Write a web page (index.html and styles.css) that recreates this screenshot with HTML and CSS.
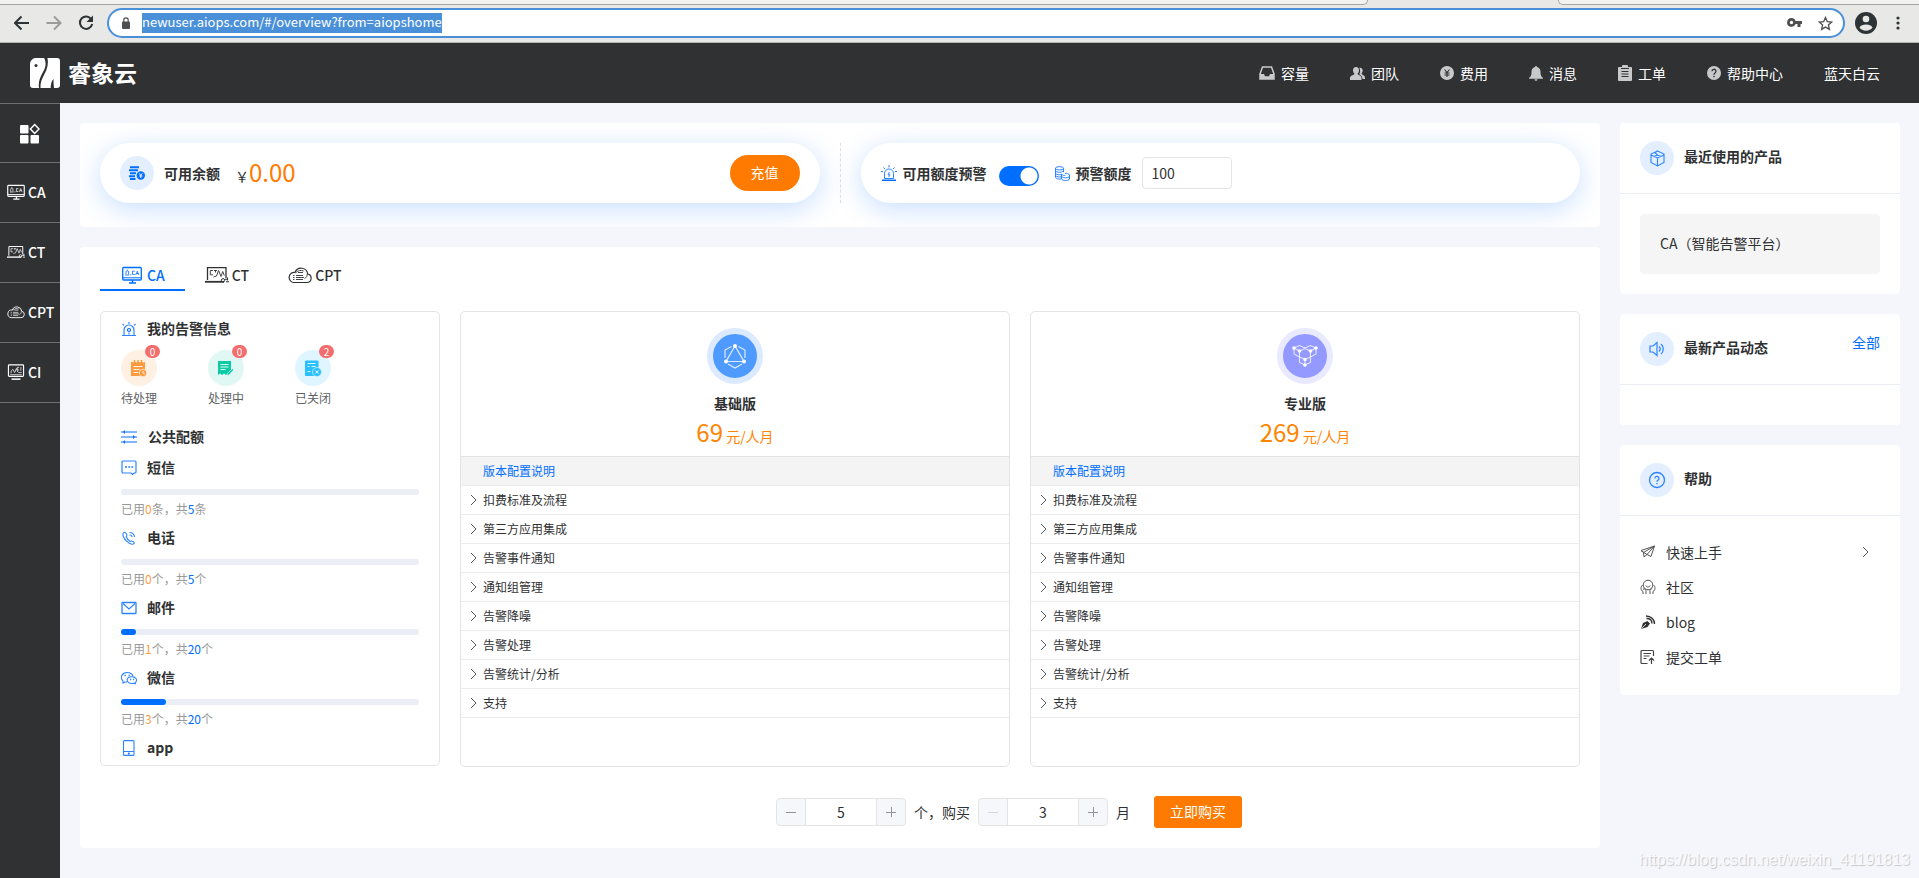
FILE: index.html
```html
<!DOCTYPE html>
<html lang="zh-CN">
<head>
<meta charset="utf-8">
<title>睿象云</title>
<link rel="stylesheet" href="styles.css">
</head>
<body>
<svg class="sprite" aria-hidden="true">
  <symbol id="i-ca" viewBox="0 0 20 18"><rect x=".7" y="1.500" width="18.600" height="12.500" rx="1" fill="none" stroke="currentColor" stroke-width="1.300"/><path d="M1 11.800h18" stroke="currentColor" stroke-width="1"/><path d="M7 17h7M10.500 14v2.500" stroke="currentColor" stroke-width="1.500"/><path d="M3.200 9h4M4 8.500V6a1.300 1.300 0 0 1 2.600 0v2.500M5.300 3.600v.8M8.200 8.800h1.200M12.800 5.200h-2.300v3.300h2.300M13.800 8.800l1.500-3.600 1.500 3.600M14.400 7.500h1.800" fill="none" stroke="currentColor" stroke-width=".8"/></symbol>
  <symbol id="i-ct" viewBox="0 0 24 18"><path d="M2.500 14V1.700h18.500V12" fill="none" stroke="currentColor" stroke-width="1.300"/><path d="M0 15.800h19" stroke="currentColor" stroke-width="1.800"/><path d="M8 4.500H5.300v4.300H8M9 4.500h3M10.500 4.500v2M8.500 11l3-1 2-5.500 2.500 6 1.700-5 1.600 4" fill="none" stroke="currentColor" stroke-width=".9"/><circle cx="18" cy="14.300" r="1.700" fill="none" stroke="currentColor"/><path d="M20 13.300h3M21 15.800h3M22.500 11.500v3" stroke="currentColor" stroke-width="1.100"/></symbol>
  <symbol id="i-cpt" viewBox="0 0 24 18"><path d="M5.500 16.500h13.200a4.300 4.300 0 0 0 1-8.500A6.600 6.600 0 0 0 7 6.400 5 5 0 0 0 5.500 16.500z" fill="none" stroke="currentColor" stroke-width="1.200"/><path d="M8 9.500h7M8 11.500h8M8 13.500h7M5 9.500h1.500M5 11.500h1.500M5 13.500h1.500M7.500 7C9.500 4.500 13 3.800 15.600 5M10 6.500h5M16.500 12.500c2-1 2.800-2.500 2.600-4.300" fill="none" stroke="currentColor" stroke-width=".9"/></symbol>
  <symbol id="i-ci" viewBox="0 0 20 18"><rect x="1.500" y="1" width="17" height="13" rx="1" fill="none" stroke="currentColor" stroke-width="1.300"/><path d="M5 17h10" stroke="currentColor" stroke-width="1.700"/><path d="M3.500 12h13M4.500 10.500V8l2-2 2 3.500 2-4.500 1.500 4M13.500 3.800h-2v3h2M15.500 3.500v4M12.500 9.500h4" fill="none" stroke="currentColor" stroke-width=".8"/></symbol>
  <symbol id="i-chev" viewBox="0 0 8 12"><path d="M1 1l5 5-5 5" fill="none" stroke="#55575c" stroke-width="1"/></symbol>
</svg>

<div class="chrome">
  <div class="tabstrip"><span class="tab-edge left-edge"></span><span class="tab-edge right-edge"></span></div>
  <div class="toolbar">
    <button class="tool" aria-label="后退"><svg width="16" height="16" viewBox="0 0 16 16"><path d="M15 8H1.500M7.500 1.500L1 8l6.500 6.500" fill="none" stroke="#2e3436" stroke-width="2"/></svg></button>
    <button class="tool" aria-label="前进"><svg width="16" height="16" viewBox="0 0 16 16"><path d="M.5 8H14M8 1.500L14.500 8 8 14.500" fill="none" stroke="#9a9c99" stroke-width="2"/></svg></button>
    <button class="tool" aria-label="刷新"><svg width="16" height="16" viewBox="0 0 16 16"><path d="M13.300 4.200A6.200 6.200 0 1 0 14.200 9" fill="none" stroke="#2e3436" stroke-width="2"/><path d="M15 .5v6.500H8.500z" fill="#2e3436"/></svg></button>
    <div class="omnibox">
      <svg width="8" height="12" viewBox="0 0 8 12"><rect y="4.500" width="8" height="7.500" rx="1" fill="#4d4f50"/><path d="M1.800 5V3a2.200 2.200 0 0 1 4.400 0v2" fill="none" stroke="#4d4f50" stroke-width="1.200"/></svg>
      <input class="url" type="text" aria-label="地址" value="newuser.aiops.com/#/overview?from=aiopshome">
      <svg class="push" width="15" height="10" viewBox="0 0 15 10"><path fill-rule="evenodd" d="M4.500 0a4.300 4.300 0 0 1 4.100 3H15v3h-1.500v3h-3V6H8.600A4.400 4.400 0 1 1 4.500 0zm0 2.800a1.700 1.700 0 1 0 0 3.400 1.700 1.700 0 0 0 0-3.400z" fill="#4d4f50"/></svg>
      <svg width="15" height="15" viewBox="0 0 15 15"><path d="M7.500 1.500l1.800 4.100 4.400.4-3.300 3 1 4.400-3.900-2.300-3.900 2.300 1-4.400-3.300-3 4.400-.4z" fill="none" stroke="#4d4f50" stroke-width="1.300"/></svg>
    </div>
    <button class="tool" aria-label="用户"><svg width="22" height="22" viewBox="0 0 22 22"><circle cx="11" cy="11" r="11" fill="#2e3436"/><circle cx="11" cy="7" r="3.300" fill="#e8e8e6"/><path d="M4.500 15.500c1.500-4 11.500-4 13 0-2.500 4.200-10.500 4.200-13 0z" fill="#e8e8e6"/></svg></button>
    <button class="tool" aria-label="菜单"><svg width="4" height="14" viewBox="0 0 4 14"><g fill="#2e3436"><circle cx="2" cy="2" r="1.600"/><circle cx="2" cy="7" r="1.600"/><circle cx="2" cy="12" r="1.600"/></g></svg></button>
  </div>
</div>

<header class="header">
  <a class="logo" href="#">
    <svg width="30" height="30" viewBox="0 0 30 30"><path d="M5.500 0H14c2.500 4 2 9-1 14C10 19.500 8 24 9 30H3a3 3 0 0 1-3-3V6a6 6 0 0 1 5.500-6z" fill="#fff"/><circle cx="6" cy="7.500" r="1.500" fill="#303133"/><path d="M17.500 0H27a3 3 0 0 1 3 3v24a3 3 0 0 1-3 3h-3c-.5-3-.5-6-.5-9-2 2-2.800 5-2.800 9H10.500c-.5-5 1.500-9.500 4-14 3-5.500 4-10.500 3-16z" fill="#fff"/></svg>
    <span>睿象云</span>
  </a>
  <nav class="topnav">
    <a href="#"><svg width="16" height="14" viewBox="0 0 16 14"><path d="M3.500 1h9L15 8v5H1V8z" fill="none" stroke="#c8c9cb" stroke-width="1.500"/><path d="M1 8h4l1 2.200h4L11 8h4v5H1z" fill="#c8c9cb"/></svg>容量</a>
    <a href="#"><svg width="15" height="13" viewBox="0 0 15 13"><g fill="#c8c9cb"><path d="M6 0c2 0 3 1.400 3 3.200 0 1.500-.6 2.700-1.500 3.500.5 1.500 4 1.500 4 4.300V13H0v-2c0-2.800 4-2.800 4.500-4.300C3.600 5.900 3 4.700 3 3.200 3 1.400 4 0 6 0z"/><path d="M10 .7c1.700 0 2.700 1.200 2.700 2.800 0 1.300-.5 2.200-1.200 2.900.4 1.500 3.500 1.600 3.500 4.100V12h-2.500c0-3-2-3.800-3.200-4.800C10.300 5.500 10.500 3 9.300 .8z"/></g></svg>团队</a>
    <a href="#"><svg width="14" height="14" viewBox="0 0 14 14"><circle cx="7" cy="7" r="7" fill="#c8c9cb"/><path d="M4.500 3.500L7 6.500l2.500-3M7 6.500V11M4.500 7h5M4.500 9h5" fill="none" stroke="#303133" stroke-width="1.100"/></svg>费用</a>
    <a href="#"><svg width="14" height="15" viewBox="0 0 14 15"><path d="M7 0c.7 0 1 .5 1 1 2.500.5 3.500 2.500 3.500 5 0 3 .5 4.500 2.500 6v.7H0V12c2-1.500 2.500-3 2.500-6 0-2.500 1-4.500 3.500-5 0-.5.300-1 1-1zM5.500 13.300h3a1.500 1.500 0 0 1-3 0z" fill="#c8c9cb"/></svg>消息</a>
    <a href="#"><svg width="14" height="16" viewBox="0 0 14 16"><path d="M1 2h3V1a1 1 0 0 1 1-1h4a1 1 0 0 1 1 1v1h3a1 1 0 0 1 1 1v12a1 1 0 0 1-1 1H1a1 1 0 0 1-1-1V3a1 1 0 0 1 1-1z" fill="#c8c9cb"/><path d="M3 3.500h8M3.500 6.500h7M3.500 9h7M3.500 11.500h7" stroke="#303133" stroke-width="1"/></svg>工单</a>
    <a href="#"><svg width="14" height="14" viewBox="0 0 14 14"><circle cx="7" cy="7" r="7" fill="#c8c9cb"/><path d="M5 5.300a2 2 0 1 1 3 1.700c-.8.500-1 .8-1 1.700M7 9.800v1.400" fill="none" stroke="#303133" stroke-width="1.300"/></svg>帮助中心</a>
    <a href="#">蓝天白云</a>
  </nav>
</header>

<div class="body">
  <nav class="sidebar">
    <a class="home" href="#" aria-label="总览"><svg width="20" height="21" viewBox="0 0 20 21"><g fill="#fff"><rect y="2" width="8.500" height="8.500" rx="1"/><rect y="12" width="8.500" height="8.500" rx="1"/><rect x="10.500" y="12" width="8.500" height="8.500" rx="1"/></g><path d="M14.700 1.500l4.300 4.500-4.300 4.500L10.400 6z" fill="none" stroke="#fff" stroke-width="1.500"/></svg></a>
    <a href="#"><svg width="18" height="16"><use href="#i-ca"/></svg>CA</a>
    <a href="#"><svg width="18" height="14"><use href="#i-ct"/></svg>CT</a>
    <a href="#"><svg width="18" height="14"><use href="#i-cpt"/></svg>CPT</a>
    <a href="#"><svg width="18" height="16"><use href="#i-ci"/></svg>CI</a>
  </nav>

  <main class="main">
    <section class="card balance">
      <div class="pill">
        <span class="round"><svg width="16" height="14" viewBox="0 0 16 14"><path d="M1 1.300h9M0 4.300h9M1 7.300h6M0 10.300h6M1 13h5.500" stroke="#006eff" stroke-width="2"/><circle cx="11.800" cy="9.500" r="4.200" fill="#006eff"/><path d="M10.200 7.200l1.600 2 1.600-2M11.800 9v3M10.200 10h3.200" fill="none" stroke="#fff" stroke-width=".9"/></svg></span>
        <b class="pill-title">可用余额</b>
        <span class="money">￥<em>0.00</em></span>
        <button class="recharge">充值</button>
      </div>
      <div class="split"></div>
      <div class="pill alert-pill">
        <svg width="16" height="16" viewBox="0 0 16 16"><path d="M1 15.300h14" stroke="#006eff" stroke-width="1.400"/><path d="M3.500 13.500V8.500a4.500 4.500 0 0 1 9 0v5zM8 0v2.500M2.500 2.500l1.500 1.500M13.500 2.500L12 4M0 6.500h2M14 6.500h2M8.500 7L7 9.800h2L7.700 12" fill="none" stroke="#2b83ff" stroke-width="1"/></svg>
        <label for="warn-on">可用额度预警</label>
        <input class="switch" id="warn-on" type="checkbox" role="switch" checked>
        <svg width="15" height="15" viewBox="0 0 15 15"><g fill="none" stroke="#2b83ff"><ellipse cx="4.500" cy="2.300" rx="4" ry="1.700"/><path d="M.5 2.300v9c.5 1.500 3 2 5.500 1.700M8.500 2.300v4M.5 4.800c1.500 2 6 2 8 0M.5 7.300c1.500 1.500 4 1.700 5.500 1.300M.5 9.600c1.500 1.300 3.500 1.600 5.500 1.200"/><path d="M6.500 8v5c1 2 7 2 8 0V9M6.500 8c1.500 1.800 3 1.500 4 1.300M6.500 10.500c1.500 1.800 6.500 1.800 8 0M10 7.500c2-.5 4 .3 4.500 1.500"/></g></svg>
        <label for="warn-at">预警额度</label>
        <input class="amount" id="warn-at" type="text" value="100">
      </div>
    </section>

    <section class="card product">
      <div class="tabs" role="tablist">
        <button class="tab active" role="tab" aria-selected="true"><svg width="20" height="18"><use href="#i-ca"/></svg>CA</button>
        <button class="tab" role="tab"><svg width="24" height="18"><use href="#i-ct"/></svg>CT</button>
        <button class="tab" role="tab"><svg width="24" height="18"><use href="#i-cpt"/></svg>CPT</button>
      </div>
      <div class="grid">
        <div class="panel info">
          <h3 class="row-title"><svg width="16" height="16" viewBox="0 0 16 16"><path d="M1 14.500h14M3 14V9a5 5 0 0 1 10 0v5M8 1v2M1.500 3l1.500 1.300M14.500 3L13 4.300M8 11.500v2" fill="none" stroke="#2b83ff" stroke-width="1.200"/><circle cx="8" cy="9" r="1.500" fill="none" stroke="#006eff" stroke-width="1.200"/></svg>我的告警信息</h3>
          <div class="alerts">
            <a class="alert" href="#"><span class="disc todo"><svg width="16" height="17" viewBox="0 0 16 17"><path d="M0 2h14v14H0z" fill="#ff9b3f"/><path d="M2.500 6.500h9M2.500 9.500h6M2.500 12.500h5" stroke="#fff0e4" stroke-width="1.200"/><path d="M3.500 0v3.500M7 0v3.500M10.500 0v3.500" stroke="#ff9b3f" stroke-width="1.500"/><path d="M2 2h1M5 2h1M8.500 2h1M12 2h1" stroke="#fff0e4"/><circle cx="12" cy="13" r="3.700" fill="#ff9b3f" stroke="#fff0e4" stroke-width=".7"/><path d="M12 11v2.300h1.800" fill="none" stroke="#fff0e4"/></svg><i class="badge">0</i></span>待处理</a>
            <a class="alert" href="#"><span class="disc doing"><svg width="16" height="16" viewBox="0 0 16 16"><path d="M0 1h13v9l-5 5-2-1.500L4 15l-2-1.500L0 15z" fill="#0ccba5"/><path d="M2.500 4.500h8M2.500 7h8M2.500 9.500h5" stroke="#e0f8f3" stroke-width="1.200"/><path d="M14.500 8.500l-5 5-.5 2 2-.5 4.500-5z" fill="#0ccba5" stroke="#e0f8f3" stroke-width=".6"/></svg><i class="badge">0</i></span>处理中</a>
            <a class="alert" href="#"><span class="disc done"><svg width="17" height="17" viewBox="0 0 17 17"><rect width="13.500" height="15.500" y=".5" rx="1" fill="#29c0ff"/><path d="M2.500 3.500h8M2.500 6.500h2M6.500 6.500h4M2.500 11.500h3" stroke="#dff5ff" stroke-width="1.200"/><circle cx="12" cy="12" r="4.500" fill="#29c0ff" stroke="#dff5ff" stroke-width=".7"/><path d="M10.300 10.300l3.400 3.400M13.700 10.300l-3.400 3.400" stroke="#dff5ff"/></svg><i class="badge">2</i></span>已关闭</a>
          </div>
          <h3 class="row-title quota"><svg width="16" height="16" viewBox="0 0 16 16"><path d="M0 3h16M0 8h16M0 13h16" stroke="#006eff" stroke-width="1.200"/><path d="M4 1L2 3l2 2zM12 6l2 2-2 2zM4 11l-2 2 2 2z" fill="#006eff"/></svg>公共配额</h3>

          <div class="meter">
            <h4 class="row-title"><svg width="16" height="16" viewBox="0 0 16 16"><path d="M10 13H2a1 1 0 0 1-1-1V2a1 1 0 0 1 1-1h12a1 1 0 0 1 1 1v10a1 1 0 0 1-1 1h-1l-1.500 1.500L10 13" fill="none" stroke="#2b83ff" stroke-width="1.200"/><path d="M4 7h2M7.200 7h2M10.300 7h2" stroke="#2b83ff" stroke-width="1.400"/></svg>短信</h4>
            <div class="bar"><span style="width:0%"></span></div>
            <p>已用<i class="used">0</i>条，共<i class="total">5</i>条</p>
          </div>
          <div class="meter">
            <h4 class="row-title"><svg width="16" height="16" viewBox="0 0 16 16"><path d="M2 3.500C3 1.500 4.500 2 5.500 4s.5 2-.3 2.800C6 9 7.500 10.500 9.300 11.500c1-.8 1.200-1 2.700 0s1.800 1.700.2 2.500C9 15.500 1.200 8.500 2 3.500zM8.500 2.500c3 0 5 2 5 4.500M8.500 5c1.500 0 2.500 1 2.500 2" fill="none" stroke="#2b83ff" stroke-width="1.100"/></svg>电话</h4>
            <div class="bar"><span style="width:0%"></span></div>
            <p>已用<i class="used">0</i>个，共<i class="total">5</i>个</p>
          </div>
          <div class="meter">
            <h4 class="row-title"><svg width="16" height="16" viewBox="0 0 16 16"><rect x="1" y="2.500" width="14" height="11" rx=".5" fill="none" stroke="#2b83ff" stroke-width="1.300"/><path d="M2 3.500l6 5.500 6-5.500" fill="none" stroke="#2b83ff" stroke-width="1.100"/></svg>邮件</h4>
            <div class="bar"><span style="width:5%"></span></div>
            <p>已用<i class="used">1</i>个，共<i class="total">20</i>个</p>
          </div>
          <div class="meter">
            <h4 class="row-title"><svg width="16" height="16" viewBox="0 0 16 16"><path d="M6 12c-1 0-1.500 0-2 0L2 13V10.800C-1.500 7.500 1 2.500 6 2.500c3.500 0 6 2 6 4.200" fill="none" stroke="#2b83ff" stroke-width="1.100"/><path d="M11 6.700c-6.500 0-6.500 6.800 0 6.800.800 0 1.300 0 1.800-.3l1.500.6v-1.300c2.500-2 1-5.800-3.300-5.800z" fill="none" stroke="#2b83ff" stroke-width="1.100"/><path d="M3.500 5.500h1.300M7.500 5.500h1.300M9 9.500h1.200M12 9.500h1.200" stroke="#2b83ff" stroke-width="1.300"/></svg>微信</h4>
            <div class="bar"><span style="width:15%"></span></div>
            <p>已用<i class="used">3</i>个，共<i class="total">20</i>个</p>
          </div>
          <div class="meter">
            <h4 class="row-title"><svg width="16" height="16" viewBox="0 0 16 16"><rect x="2.500" y=".6" width="10.500" height="14.800" rx="1" fill="none" stroke="#2b83ff" stroke-width="1.100"/><path d="M2.500 11.500H13" stroke="#2b83ff"/><circle cx="7.800" cy="13.500" r="1" fill="#006eff"/></svg>app</h4>
          </div>
        </div>

        <article class="panel plan">
          <div class="plan-head">
            <span class="medal basic"><svg width="26" height="26" viewBox="0 0 26 26"><g fill="none" stroke="#dcebff" stroke-width="1.200"><path d="M9.500 3.500L3 7v8M16.500 3.500L23 7v8M6 21l7 4 7-4"/><path d="M13 3L4 18.500h18z"/></g><g fill="#fff"><circle cx="13" cy="3" r="2"/><circle cx="4" cy="18.500" r="2"/><circle cx="22" cy="18.500" r="2"/></g></svg></span>
            <h3>基础版</h3>
            <p class="price"><em>69</em> 元/人月</p>
          </div>
          <div class="plan-caption">版本配置说明</div>
          <button class="feature"><svg width="8" height="12"><use href="#i-chev"/></svg>扣费标准及流程</button>
          <button class="feature"><svg width="8" height="12"><use href="#i-chev"/></svg>第三方应用集成</button>
          <button class="feature"><svg width="8" height="12"><use href="#i-chev"/></svg>告警事件通知</button>
          <button class="feature"><svg width="8" height="12"><use href="#i-chev"/></svg>通知组管理</button>
          <button class="feature"><svg width="8" height="12"><use href="#i-chev"/></svg>告警降噪</button>
          <button class="feature"><svg width="8" height="12"><use href="#i-chev"/></svg>告警处理</button>
          <button class="feature"><svg width="8" height="12"><use href="#i-chev"/></svg>告警统计/分析</button>
          <button class="feature"><svg width="8" height="12"><use href="#i-chev"/></svg>支持</button>
        </article>

        <article class="panel plan">
          <div class="plan-head">
            <span class="medal pro"><svg width="26" height="26" viewBox="0 0 26 26"><g fill="none" stroke="#e6e7ff" stroke-width="1.100"><path d="M2 5l5.500-2.500L13 5l5.500-2.500L24 5v6l-5.500 3v5.500L13 22l-5.500-2.500V14L2 11zM2 5l5.500 3v6l5.500 2.500 5.500-2.500V8L24 5M7.500 8L13 5.500 18.500 8M13 16.500V22"/></g><g fill="#fff"><circle cx="2" cy="5" r="1.800"/><circle cx="24" cy="5" r="1.800"/><circle cx="7.500" cy="8" r="1.800"/><circle cx="18.500" cy="8" r="1.800"/><circle cx="13" cy="16.500" r="1.800"/><circle cx="13" cy="22" r="1.800"/></g></svg></span>
            <h3>专业版</h3>
            <p class="price"><em>269</em> 元/人月</p>
          </div>
          <div class="plan-caption">版本配置说明</div>
          <button class="feature"><svg width="8" height="12"><use href="#i-chev"/></svg>扣费标准及流程</button>
          <button class="feature"><svg width="8" height="12"><use href="#i-chev"/></svg>第三方应用集成</button>
          <button class="feature"><svg width="8" height="12"><use href="#i-chev"/></svg>告警事件通知</button>
          <button class="feature"><svg width="8" height="12"><use href="#i-chev"/></svg>通知组管理</button>
          <button class="feature"><svg width="8" height="12"><use href="#i-chev"/></svg>告警降噪</button>
          <button class="feature"><svg width="8" height="12"><use href="#i-chev"/></svg>告警处理</button>
          <button class="feature"><svg width="8" height="12"><use href="#i-chev"/></svg>告警统计/分析</button>
          <button class="feature"><svg width="8" height="12"><use href="#i-chev"/></svg>支持</button>
        </article>

        <div class="purchase">
          <div class="stepper">
            <button aria-label="减少数量"><svg width="10" height="10" viewBox="0 0 10 10"><path d="M0 5.500h10" stroke="currentColor"/></svg></button>
            <input type="text" id="seats" aria-label="数量" value="5">
            <button aria-label="增加数量"><svg width="10" height="10" viewBox="0 0 10 10"><path d="M0 5.500h10M5.500 0v10" stroke="currentColor"/></svg></button>
          </div>
          <label for="seats">个，购买</label>
          <div class="stepper">
            <button aria-label="减少月数" disabled><svg width="10" height="10" viewBox="0 0 10 10"><path d="M0 5.500h10" stroke="currentColor"/></svg></button>
            <input type="text" id="months" aria-label="月数" value="3">
            <button aria-label="增加月数"><svg width="10" height="10" viewBox="0 0 10 10"><path d="M0 5.500h10M5.500 0v10" stroke="currentColor"/></svg></button>
          </div>
          <label for="months">月</label>
          <button class="buy">立即购买</button>
        </div>
      </div>
    </section>
  </main>

  <aside class="aside">
    <section class="card">
      <div class="aside-head">
        <span class="round"><svg width="17" height="17" viewBox="0 0 17 17"><path d="M8.500 1l6.500 3v8.500L8.500 16 2 12.500V4zM2 5l6.500 3L15 5M8.500 8v8M8.500 1L6 2.500 8.500 5 5 6.500M8.500 5L12 6.500" fill="none" stroke="#2b83ff" stroke-width="1.100"/></svg></span>
        <h2>最近使用的产品</h2>
      </div>
      <div class="recent"><a href="#">CA（智能告警平台）</a></div>
    </section>
    <section class="card">
      <div class="aside-head">
        <span class="round"><svg width="16" height="16" viewBox="0 0 16 16"><path d="M1 5h3l4-3.500v13L4 11H1zM10 5.500c1.500 1.500 1.500 3.500 0 5M12 3c3 2.500 3 7.500 0 10" fill="none" stroke="#2b83ff" stroke-width="1.200"/></svg></span>
        <h2>最新产品动态</h2>
        <a class="all" href="#">全部</a>
      </div>
      <div class="empty"></div>
    </section>
    <section class="card">
      <div class="aside-head">
        <span class="round"><svg width="18" height="18" viewBox="0 0 18 18"><circle cx="9" cy="9" r="7.500" fill="none" stroke="#2b83ff" stroke-width="1.300"/><path d="M7 7.500a2 2 0 1 1 3 1.600c-.8.500-1 .8-1 1.700M9 12v1.300" fill="none" stroke="#2b83ff" stroke-width="1.300"/></svg></span>
        <h2>帮助</h2>
      </div>
      <div class="help">
        <a href="#"><svg width="16" height="16" viewBox="0 0 16 16"><path d="M1 6.500l13.500-4.500L11 12.500l-4-2zM7 10.500l-3 2.500-.5-4.500L14.500 2zM3.500 8.500L1 6.500" fill="none" stroke="#555" stroke-width="1"/></svg>快速上手<svg class="push" width="8" height="12"><use href="#i-chev"/></svg></a>
        <a href="#"><svg width="16" height="16" viewBox="0 0 16 16"><circle cx="8" cy="6" r="4.800" fill="none" stroke="#555"/><path d="M5.800 6.500c.8 2 3.600 2 4.400 0M2.500 6C.5 8 .3 11 3 12.500v2.500M13.500 6c2 2 2.200 5-.500 6.500v2.500M4.500 9.500L3 10.500M6 15v-3.500l-1.800-2M10 15v-3.500l1.800-2" fill="none" stroke="#555"/></svg>社区</a>
        <a href="#"><svg width="16" height="16" viewBox="0 0 16 16"><path d="M1 15l2-6 4.500-2L10 9.500 7.500 13z" fill="#303133"/><path d="M1.500 14.500L6 10" stroke="#fff" stroke-width=".8"/><path d="M6 2c5 0 8.500 3.500 8.500 8M6.500 4.500c3.500 0 5.500 2 5.500 5" fill="none" stroke="#303133" stroke-width="1.400"/></svg>blog</a>
        <a href="#"><svg width="16" height="16" viewBox="0 0 16 16"><path d="M7.500 14.500H2a1 1 0 0 1-1-1v-11a1 1 0 0 1 1-1h10.500a1 1 0 0 1 1 1V7M3.500 4.500h7.500M3.500 7h6M3.500 9.500h3M11.500 15V9M9 11.500L11.500 9l2.500 2.500" fill="none" stroke="#444" stroke-width="1.200"/></svg>提交工单</a>
      </div>
    </section>
  </aside>
</div>
<div class="watermark">https://blog.csdn.net/weixin_41191813</div>
</body>
</html>
```

FILE: styles.css
```css
* { box-sizing: border-box; }
body, h2, h3, h4, p { margin: 0; }
body {
  min-height: 100vh;
  display: flex;
  flex-direction: column;
  background: #f5f6fc;
  color: #303133;
  font: 14px/20px "Noto Sans CJK SC", "Noto Sans", sans-serif;
}
button, input { font: inherit; color: inherit; margin: 0; }
button { padding: 0; border: 0; background: none; cursor: pointer; }
a { color: inherit; text-decoration: none; }
i, em { font-style: normal; }
svg { flex: none; display: block; }
.sprite { position: absolute; width: 0; height: 0; }
.push { margin-left: auto; }

/* browser bar */
.chrome { background: #e8e8e6; border-bottom: 1px solid #b2b4b0; }
.tabstrip { height: 5px; display: flex; justify-content: space-between; gap: 190px; }
.tab-edge { background: #f2f2f1; border-bottom: 1px solid #a5a7a4; }
.left-edge { flex: 1369; border-right: 1px solid #a5a7a4; border-bottom-right-radius: 5px; }
.right-edge { flex: 360; border-left: 1px solid #a5a7a4; border-bottom-left-radius: 5px; }
.toolbar { display: flex; align-items: center; gap: 16px; height: 37px; padding: 0 19px 1px 14px; }
.toolbar .omnibox { margin-right: -6px; margin-left: -3px; }
.tool:last-child { margin-left: 3px; }
.omnibox {
  flex: 1;
  height: 30px;
  display: flex;
  align-items: center;
  gap: 12px;
  padding: 0 10px 0 13px;
  border: 2px solid #4a90d9;
  border-radius: 15px;
  background: #fff;
}
.omnibox .push + svg { margin-left: 4px; }
.url {
  field-sizing: content;
  height: 20px;
  padding: 0 0 2px;
  border: 0;
  background: #4a90d9;
  color: #fff;
  font-size: 13px;
}

/* header */
.header {
  height: 60px;
  flex: none;
  display: flex;
  align-items: center;
  justify-content: space-between;
  padding: 0 39px 0 30px;
  background: #303133;
  color: #fff;
}
.logo { display: flex; align-items: flex-start; gap: 8px; font-size: 23px; font-weight: 700; line-height: 28px; }
.topnav { display: flex; gap: 41px; }
.topnav a { display: flex; align-items: center; gap: 6px; }

/* layout */
.body { flex: 1; display: flex; }
.sidebar { width: 60px; flex: none; background: #303133; border-top: 1px solid #6e6f71; color: #fff; }
.sidebar a {
  height: 60px;
  display: flex;
  align-items: center;
  gap: 3px;
  padding: 0 0 2px 7px;
  border-bottom: 1px solid #6e6f71;
  font-weight: 500;
}
.sidebar .home { height: 59px; justify-content: center; padding: 0; }
.main { flex: 1; min-width: 0; padding: 20px; display: flex; flex-direction: column; gap: 20px; }
.aside { width: 299px; flex: none; padding: 20px 19px 20px 0; display: flex; flex-direction: column; gap: 20px; }
.card { background: #fff; border-radius: 4px; }

/* balance */
.balance { display: flex; padding: 20px 20px 24px; gap: 20px; overflow: hidden; }
.pill {
  flex: 1;
  height: 60px;
  display: flex;
  align-items: center;
  padding: 0 20px;
  border-radius: 30px;
  background: #fff;
  box-shadow: 0 6px 28px rgba(0, 110, 255, .22);
}
.split { width: 1px; border-left: 1px dashed #dcdfe6; }
.round {
  width: 34px;
  height: 34px;
  flex: none;
  display: flex;
  align-items: center;
  justify-content: center;
  border-radius: 50%;
  background: #e3efff;
}
.pill-title { margin: 0 15px 0 10px; }
.money { padding-top: 2px; }
.money em { font-size: 24px; color: #ff7a00; }
.recharge { margin-left: auto; width: 70px; height: 36px; padding-bottom: 2px; border-radius: 18px; background: #ff7a00; color: #fff; }
.alert-pill label { font-weight: 700; margin-left: 6px; }
.switch {
  appearance: none;
  width: 40px;
  height: 20px;
  margin: 6px 16px 0 12px;
  border-radius: 10px;
  background: radial-gradient(circle at 30px 10px, #fff 8px, #006eff 9px);
}
.amount { width: 90px; height: 32px; margin-left: 10px; padding: 0 9px; border: 1px solid #e4e4e4; border-radius: 4px; background: #fff; }

/* product */
.product { padding: 18px 20px 20px; }
.tabs { display: flex; margin-bottom: 20px; }
.tab {
  display: flex;
  align-items: center;
  gap: 3px;
  height: 26px;
  padding: 0 19px 4px 20px;
  border-bottom: 2px solid transparent;
  font-weight: 500;
}
.tab.active { padding: 0 20px 4px 22px; gap: 5px; color: #006eff; border-color: #006eff; }
.grid { display: grid; grid-template-columns: 340px 1fr 1fr; gap: 29px 20px; }
.panel { border: 1px solid #e4e4e4; border-radius: 5px; min-width: 0; }
.info { padding: 7px 20px 6px; height: 455px; }
.row-title { display: flex; align-items: flex-start; gap: 10px; height: 20px; font-size: 14px; line-height: 18px; font-weight: 700; }
.row-title svg { margin-top: 2px; }
.alerts { display: flex; gap: 51px; margin-top: 11px; }
.alert { font-size: 12px; line-height: 16px; color: #606266; }
.disc { position: relative; display: flex; align-items: center; justify-content: center; width: 36px; height: 36px; margin-bottom: 4px; border-radius: 50%; }
.todo { background: #fff0e4; }
.doing { background: #e0f8f3; }
.done { background: #dff5ff; }
.badge {
  position: absolute;
  top: -5px;
  right: -3px;
  width: 15px;
  height: 13px;
  border-radius: 7px;
  background: #f56c6c;
  color: #fff;
  font-size: 10px;
  line-height: 13px;
  text-align: center;
}
.quota { margin-top: 21px; gap: 11px; }
.meter { margin-top: 11px; height: 59px; }
.bar { height: 6px; margin-top: 11px; border-radius: 3px; background: #ebeef5; }
.bar span { display: block; height: 100%; border-radius: 3px; background: #006eff; }
.meter p { margin-top: 6px; font-size: 12px; line-height: 16px; color: #999; }
.used { color: #ff9b3f; }
.total { color: #006eff; }

.plan-head { height: 145px; padding-top: 16px; display: flex; flex-direction: column; align-items: center; border-bottom: 1px solid #e4e4e4; }
.plan-head h3 { margin-top: 9px; font-size: 14px; line-height: 20px; }
.medal { width: 56px; height: 56px; display: flex; align-items: center; justify-content: center; border-radius: 50%; border: 6px solid; }
.basic { background: #4f9aff; border-color: #dbeaff; }
.pro { background: #9499ff; border-color: #e9eaff; }
.price { margin-top: 4px; line-height: 30px; color: #ff8400; }
.price em { font-size: 24px; }
.plan-caption, .feature { height: 29px; font-size: 12px; line-height: 28px; border-bottom: 1px solid #ececec; }
.plan-caption { padding-left: 22px; background: #f4f4f4; color: #006eff; }
.feature { display: flex; align-items: center; gap: 5px; width: 100%; padding-left: 9px; }
.plan { height: 456px; }

.purchase { grid-column: 2 / 4; display: flex; align-items: center; justify-content: center; gap: 8px; padding-right: 22px; }
.stepper { display: flex; width: 130px; height: 28px; border: 1px solid #e4e4e4; border-radius: 4px; overflow: hidden; background: #f5f7fa; }
.stepper button { width: 28px; display: flex; align-items: center; justify-content: center; color: #909399; }
.stepper button:disabled { color: #d3d6dc; }
.stepper input { flex: 1; min-width: 0; padding: 0; border: solid #e4e4e4; border-width: 0 1px; background: #fff; text-align: center; }
.buy { width: 88px; height: 32px; margin-left: 16px; padding-bottom: 2px; border-radius: 3px; background: #ff7a00; color: #fff; }

/* aside */
.aside-head { display: flex; gap: 10px; padding: 18px 20px; border-bottom: 1px solid #ebeef5; }
.aside-head h2 { font-size: 14px; line-height: 30px; }
.all { margin-left: auto; color: #006eff; line-height: 20px; }
.recent { padding: 20px; }
.recent a { display: block; padding: 19px 20px 21px; border-radius: 4px; background: #f5f5f5; }
.empty { height: 40px; }
.help { display: flex; flex-direction: column; gap: 15px; padding: 26px 30px 28px 20px; }
.help a { display: flex; align-items: center; gap: 10px; }

.watermark {
  position: absolute;
  right: 9px;
  bottom: 8px;
  font: 16px/20px "Liberation Sans", Arial, sans-serif;
  color: rgba(255, 255, 255, .8);
  text-shadow: 1px 1px 1px rgba(0, 0, 0, .2);
}
```
